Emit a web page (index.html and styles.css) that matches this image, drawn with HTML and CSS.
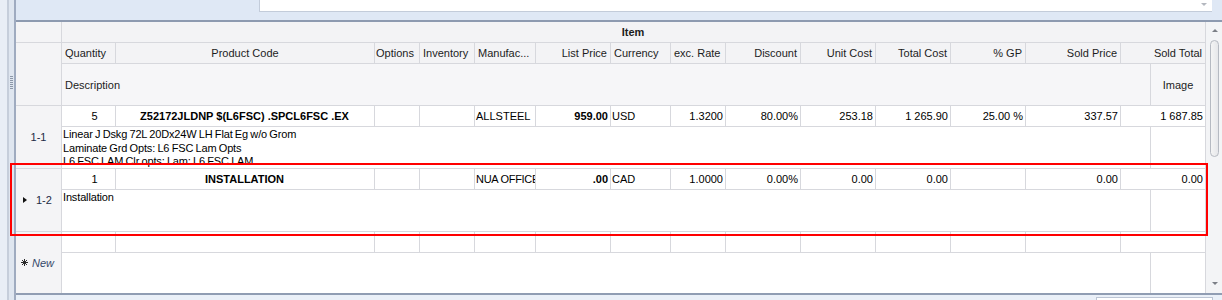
FILE: index.html
```html
<!DOCTYPE html>
<html lang="en">

<head>
    <meta charset="UTF-8">
    <title>Quote Items</title>
    <link rel="stylesheet" href="styles.css">
</head>

<body>

    <div class="window">

        <!-- Left splitter frame -->
        <div class="side-frame">
            <span class="grip"></span>
        </div>

        <div class="main">

            <!-- Top panel with lookup box -->
            <div class="top-panel">
                <div class="lookup">
                    <span class="drop-arrow"></span>
                </div>
            </div>

            <!-- Items grid -->
            <div class="grid-wrap">
                <div class="grid">

                    <!-- band -->
                    <div class="cell rh rh-band"></div>
                    <div class="cell band">Item</div>

                    <!-- column headers -->
                    <div class="cell rh rh-head"></div>
                    <div class="cell hd">Quantity</div>
                    <div class="cell hd ctr">Product Code</div>
                    <div class="cell hd hd-tight">Options</div>
                    <div class="cell hd">Inventory</div>
                    <div class="cell hd">Manufac...</div>
                    <div class="cell hd num">List Price</div>
                    <div class="cell hd">Currency</div>
                    <div class="cell hd">exc. Rate</div>
                    <div class="cell hd num">Discount</div>
                    <div class="cell hd num">Unit Cost</div>
                    <div class="cell hd num">Total Cost</div>
                    <div class="cell hd num">% GP</div>
                    <div class="cell hd num">Sold Price</div>
                    <div class="cell hd num span-total">Sold Total</div>
                    <div class="cell hd-desc desc-span">Description</div>
                    <div class="cell hd-desc ctr">Image</div>

                    <!-- row 1-1 -->
                    <div class="cell rh">1-1</div>
                    <div class="cell qty">5</div>
                    <div class="cell ctr b">Z52172JLDNP $(L6FSC) .SPCL6FSC .EX</div>
                    <div class="cell"></div>
                    <div class="cell"></div>
                    <div class="cell txt">ALLSTEEL</div>
                    <div class="cell num b">959.00</div>
                    <div class="cell txt">USD</div>
                    <div class="cell num">1.3200</div>
                    <div class="cell num">80.00%</div>
                    <div class="cell num">253.18</div>
                    <div class="cell num">1 265.90</div>
                    <div class="cell num">25.00 %</div>
                    <div class="cell num">337.57</div>
                    <div class="cell num span-total">1 687.85</div>
                    <div class="cell desc desc-span">
                        Linear J Dskg 72L 20Dx24W LH Flat Eg w/o Grom<br>
                        Laminate Grd Opts: L6 FSC Lam Opts<br>
                        L6 FSC LAM Clr opts: Lam: L6 FSC LAM
                    </div>
                    <div class="cell"></div>

                    <!-- row 1-2 (focused) -->
                    <div class="cell rh rh-focus"><span class="indicator"></span>1-2</div>
                    <div class="cell qty">1</div>
                    <div class="cell ctr b">INSTALLATION</div>
                    <div class="cell"></div>
                    <div class="cell"></div>
                    <div class="cell txt tight">NUA OFFICE</div>
                    <div class="cell num b">.00</div>
                    <div class="cell txt">CAD</div>
                    <div class="cell num">1.0000</div>
                    <div class="cell num">0.00%</div>
                    <div class="cell num">0.00</div>
                    <div class="cell num">0.00</div>
                    <div class="cell num"></div>
                    <div class="cell num">0.00</div>
                    <div class="cell num span-total">0.00</div>
                    <div class="cell desc desc-span">Installation</div>
                    <div class="cell"></div>

                    <!-- new item row -->
                    <div class="cell rh rh-new last">
                        <svg class="new-star" width="7" height="7" viewBox="0 0 7 7">
                            <path d="M3.5 0V7M0 3.5H7M1 1L6 6M6 1L1 6" stroke="#2b2b2b" stroke-width="1" />
                        </svg>
                        New
                    </div>
                    <div class="cell"></div>
                    <div class="cell"></div>
                    <div class="cell"></div>
                    <div class="cell"></div>
                    <div class="cell"></div>
                    <div class="cell"></div>
                    <div class="cell"></div>
                    <div class="cell"></div>
                    <div class="cell"></div>
                    <div class="cell"></div>
                    <div class="cell"></div>
                    <div class="cell"></div>
                    <div class="cell"></div>
                    <div class="cell span-total"></div>
                    <div class="cell desc-span last"></div>
                    <div class="cell last"></div>
                </div>

                <!-- vertical scrollbar -->
                <div class="scrollbar">
                    <span class="arrow-up"></span>
                    <span class="thumb"></span>
                    <span class="arrow-down"></span>
                </div>
            </div>

            <!-- Bottom panel -->
            <div class="bottom-panel">
                <div class="bottom-box"></div>
            </div>
        </div>

        <!-- highlight around the focused row -->
        <div class="selection"></div>
    </div>

</body>

</html>
```

FILE: styles.css
```css
* {
    margin: 0;
    padding: 0;
    box-sizing: border-box;
}

body {
    font-family: "Liberation Sans", Arial, sans-serif;
    font-size: 11px;
    color: #000;
    background-color: #e8edf5;
    overflow: hidden;
}

.window {
    display: flex;
    width: 1222px;
    height: 300px;
    position: relative;
}

/* Left frame */
.side-frame {
    width: 16px;
    flex-shrink: 0;
    background: linear-gradient(to right, #e9eef6 0 7px, #c6cedb 7px 9px, #dfe6f0 9px 14px, #9fabc0 14px 16px);
    padding: 76px 0 0 10px;
}

.grip {
    display: block;
    width: 3px;
    height: 14px;
    background: repeating-linear-gradient(to bottom, #8c97a8 0 1px, transparent 1px 2px);
}

.main {
    flex: 1;
    display: flex;
    flex-direction: column;
}

/* Top panel */
.top-panel {
    height: 22px;
    background-color: #dfe8f5;
    border-bottom: 2px solid #8d9ab0;
    padding-left: 243px;
}

.lookup {
    width: 953px;
    height: 12px;
    background-color: #fff;
    border-left: 1px solid #c3ccda;
    border-bottom: 1px solid #c3ccda;
    display: flex;
    justify-content: flex-end;
    padding: 3px 5px 0 0;
}

.drop-arrow {
    width: 0;
    height: 0;
    border-left: 3px solid transparent;
    border-right: 3px solid transparent;
    border-top: 3px solid #b4b8bf;
}

/* Grid */
.grid-wrap {
    display: flex;
    height: 271px;
}

.grid {
    display: grid;
    grid-template-columns: 46px 54px 259px 45px 55px 61px 75px 60px 55px 75px 75px 75px 75px 95px 30px 55px;
    grid-template-rows: 21px 21px 42px 21px 42px 21px 42px 21px 40px;
    background-color: #fff;
}

.cell {
    border-right: 1px solid #d7d8dd;
    border-bottom: 1px solid #d7d8dd;
    padding: 0 2px 0 1px;
    white-space: nowrap;
    overflow: hidden;
    display: flex;
    align-items: center;
}

.cell.last {
    border-bottom: none;
}

.tight {
    letter-spacing: -0.3px;
    padding-right: 0;
}

.num {
    justify-content: flex-end;
}

.ctr {
    justify-content: center;
}

.b {
    font-weight: bold;
}

.qty {
    justify-content: center;
    padding-left: 14px;
}

.span-total {
    grid-column: span 2;
}

.desc-span {
    grid-column: span 14;
}

.band {
    grid-column: span 15;
    justify-content: center;
    font-weight: bold;
    background-color: #f3f3f5;
    color: #1c1c1c;
}

.hd {
    background-color: #f3f3f5;
    color: #1c1c1c;
    padding: 0 3px;
}

.hd-tight {
    padding-left: 1px;
}

.hd-desc {
    background-color: #f6f6f8;
    color: #1c1c1c;
    padding: 0 3px;
}

.desc {
    display: block;
    white-space: nowrap;
    line-height: 13.5px;
    letter-spacing: -0.15px;
    word-spacing: -0.6px;
    padding: 1px 0 0 1px;
}

/* Row indicator column */
.rh {
    grid-row: span 2;
    background-color: #f4f4f6;
    justify-content: center;
    color: #1d2b45;
    padding: 0;
}

.rh-band {
    grid-row: span 1;
}

.rh-focus {
    justify-content: flex-start;
    padding-left: 7px;
}

.indicator {
    width: 0;
    height: 0;
    border-top: 3.5px solid transparent;
    border-bottom: 3.5px solid transparent;
    border-left: 4px solid #111;
    margin-right: 9px;
}

.rh-new {
    justify-content: flex-start;
    padding-left: 5px;
    font-style: italic;
    color: #34486a;
    gap: 4px;
}

/* Scrollbar */
.scrollbar {
    width: 16px;
    background-color: #f3f4f6;
    display: flex;
    flex-direction: column;
    align-items: center;
    padding: 7px 0 8px 1px;
}

.arrow-up {
    width: 0;
    height: 0;
    border-left: 3px solid transparent;
    border-right: 3px solid transparent;
    border-bottom: 3px solid #7b7f86;
}

.thumb {
    width: 9px;
    height: 117px;
    margin-top: 8px;
    border: 1px solid #b6bac2;
    border-radius: 5px;
    background: linear-gradient(to right, #f4f4f4, #e6e7ea);
}

.arrow-down {
    width: 0;
    height: 0;
    margin-top: auto;
    border-left: 3px solid transparent;
    border-right: 3px solid transparent;
    border-top: 3px solid #7b7f86;
}

/* Bottom panel */
.bottom-panel {
    height: 7px;
    background-color: #eaf0f8;
    border-top: 2px solid #909db3;
    padding: 2px 0 0 1080px;
}

.bottom-box {
    width: 117px;
    height: 3px;
    background-color: #fff;
    border-top: 1px solid #bcc5d4;
    border-left: 1px solid #bcc5d4;
    border-right: 1px solid #bcc5d4;
}

/* Red highlight overlay */
.selection {
    position: absolute;
    left: 10px;
    top: 163px;
    width: 1198px;
    height: 73px;
    border: 2px solid #ff0000;
    pointer-events: none;
}
```
